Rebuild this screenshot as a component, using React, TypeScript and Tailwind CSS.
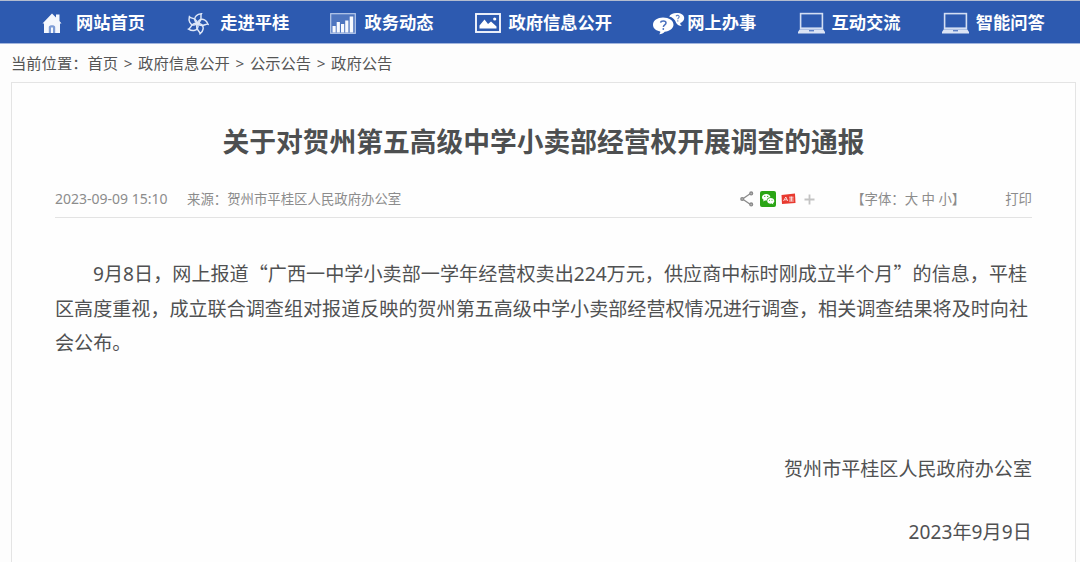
import React from "react";

const HomeIcon = () => (
  <svg width="20" height="21" viewBox="0 0 20 21" fill="#f4f7fd">
    <path d="M10 0.5 L0.5 10.5 H2 V20 H18 V10.5 H19.5 L17.5 8 V1.5 H14 V4.4 Z" />
    <path d="M6.8 20 V14 C6.8 11.5 13.2 11.5 13.2 14 V20 H11 V14.5 H9 V20 Z" fill="#7d9cd6" />
  </svg>
);

const PinwheelIcon = () => (
  <svg width="23" height="23" viewBox="0 0 22 22" fill="none" stroke="#dfe8f8" strokeWidth="1.4">
    {[8, 80, 152, 224, 296].map((deg) => (
      <path
        key={deg}
        d="M11 11 C7.6 9.8 6.8 6.2 8.8 3.8 C9.8 2.4 11.4 1.6 13.4 1.2 C12.6 3.2 14 4.6 13.6 7 C13.3 8.9 12.3 10.2 11 11 Z"
        transform={`rotate(${deg} 11 11)`}
      />
    ))}
  </svg>
);

const ChartIcon = () => (
  <svg width="26" height="21" viewBox="0 0 26 21">
    <rect x="0.7" y="0.7" width="24.6" height="19.6" fill="#7f9ed6" fillOpacity="0.4" stroke="#b9caeb" strokeWidth="1.2" />
    <path d="M2.5 13h3.2v6.5H2.5z M6.7 9h3.2v10.500H6.7z M11 11h3.2v8.500H11z M15.200 7.500h3.200v12h-3.200z M19.700 3.500h3.500v16h-3.500z" fill="#f7f9fe" />
  </svg>
);

const PictureIcon = () => (
  <svg width="26" height="20" viewBox="0 0 26 20">
    <rect x="1" y="1" width="24" height="18" fill="none" stroke="#f2f5fc" strokeWidth="1.9" />
    <path d="M4.5 15.5 V12.5 L9.5 6.5 L13 11 L16 8.5 L21.5 13.5 V15.5 Z" fill="#fff" />
    <circle cx="19.7" cy="6" r="1.6" fill="#fff" />
  </svg>
);

const BubblesIcon = () => (
  <svg width="32" height="23" viewBox="0 0 32 23">
    <path d="M23.5 1 C28.2 1 31.2 3 31.2 6 C31.2 8.4 29.6 10.2 27.2 11 C27.2 12.2 27.8 13.2 28.8 14 C26.2 14 24.4 13 23.2 11 C22 7.5 19.6 5.4 16.2 4.6 C17.2 2.3 20 1 23.5 1 Z" fill="#fff" />
    <path d="M10 5.5 C16 5.5 20.5 8.500 20.500 12.800 C20.500 16.500 16.500 19.400 11.700 19.800 C10.500 21.300 8.700 22.300 6.200 22.300 C7.100 21.400 7.400 20.400 7.200 19.500 C2.800 18.800 0 16.200 0 12.800 C0 8.500 4.500 5.500 10 5.500 Z" fill="#fff" />
    <path d="M7.600 10.600 C8 8.400 13 8.200 13 11 C13 13 10.400 12.800 10.400 15" fill="none" stroke="#4a70bd" strokeWidth="1.5" />
    <circle cx="10.300" cy="17" r="0.900" fill="#4a70bd" />
    <path d="M23 4.200 C23.600 3 26.400 3.100 26.200 4.800 C26.100 6 24.900 5.800 24.800 7.200" fill="none" stroke="#5f81c6" strokeWidth="1.100" />
    <circle cx="24.800" cy="8.900" r="0.700" fill="#5f81c6" />
  </svg>
);

const LaptopIcon = () => (
  <svg width="27" height="22" viewBox="0 0 27 22">
    <rect x="2.6" y="1.6" width="21.8" height="14.6" fill="none" stroke="#d3def3" strokeWidth="1.6" />
    <path d="M1.8 17.2 H25.2 L27 20 V21.4 H0 V20 Z" fill="#dbe4f5" />
    <path d="M11 18 H16 V19.4 H11 Z" fill="#5f81c6" />
  </svg>
);

const navItems = [
  { label: "网站首页", icon: <HomeIcon /> },
  { label: "走进平桂", icon: <PinwheelIcon /> },
  { label: "政务动态", icon: <ChartIcon /> },
  { label: "政府信息公开", icon: <PictureIcon /> },
  { label: "网上办事", icon: <BubblesIcon /> },
  { label: "互动交流", icon: <LaptopIcon /> },
  { label: "智能问答", icon: <LaptopIcon /> },
];

const ShareIcon = () => (
  <svg width="14" height="16" viewBox="0 0 14 16" fill="none" stroke="#8b8b8b" strokeWidth="1.3">
    <path d="M10.5 2.5 L2.5 8 L10.5 13.5" />
    <circle cx="11.2" cy="2.4" r="1.4" fill="#bbb" />
    <circle cx="2.2" cy="8" r="1.4" fill="#bbb" />
    <circle cx="11.2" cy="13.4" r="1.4" fill="#bbb" />
  </svg>
);

const WechatIcon = () => (
  <svg width="16" height="16" viewBox="0 0 16 16">
    <rect width="16" height="16" rx="2" fill="#2aa515" />
    <path d="M6.2 3 C8.6 3 10.4 4.4 10.4 6.3 C8.2 6.3 6.7 7.6 6.8 9.6 L5 9.4 L3.2 10.4 L3.6 8.8 C2.6 8.1 2 7.3 2 6.2 C2 4.4 3.9 3 6.2 3 Z" fill="#fff" />
    <path d="M10.7 7 C12.7 7 14.3 8.2 14.3 9.9 C14.3 10.8 13.8 11.5 13 12.1 L13.3 13.4 L11.8 12.6 C9.2 13.1 7.2 11.8 7.2 9.9 C7.2 8.2 8.7 7 10.7 7 Z" fill="#fff" />
    <g fill="#2aa515">
      <circle cx="4.8" cy="5.4" r="0.6" />
      <circle cx="7.7" cy="5.4" r="0.6" />
      <circle cx="9.5" cy="9.2" r="0.5" />
      <circle cx="12" cy="9.2" r="0.5" />
    </g>
  </svg>
);

const ReadBadge = () => (
  <svg width="15" height="12" viewBox="0 0 15 12">
    <path d="M0.5 2 L14 0.6 L14.5 10 L1 11 Z" fill="#e8392f" />
    <path d="M2.5 8 L4.8 4 L6.8 8 M3.6 6.8 H6 M8 4.2 H12.6 M8.2 6 H12.6 M8 8 H12.8 M10.3 3.5 V8.3" fill="none" stroke="#fff" strokeWidth="0.9" strokeOpacity="0.85" />
  </svg>
);

const App = () => {
  return (
    <div
      lang="zh-CN"
      className="h-[562px] w-[1080px] overflow-hidden bg-[#fdfdfd] font-['Noto_Sans','Noto_Sans_CJK_SC',sans-serif] whitespace-nowrap text-[#505152]"
    >
      <nav className="flex h-[44px] items-center border-t border-b border-t-[#b3bccf] border-b-[#a3b6dd] bg-[#2d5ab0] pt-0.5 pl-[40px]">
        {navItems.map((item) => (
          <a key={item.label} className="mr-[39.2px] flex shrink-0 items-center">
            <span className="flex w-9 pl-0.5">{item.icon}</span>
            <span className="text-[17.25px] leading-6 font-bold text-white">{item.label}</span>
          </a>
        ))}
      </nav>

      <div className="flex h-[38px] items-center pl-[11px] text-[15.3px] leading-5 text-[#555]">
        <span>当前位置：</span>
        <span>首页</span>
        <span className="w-5 text-center">&gt;</span>
        <span>政府信息公开</span>
        <span className="w-5 text-center">&gt;</span>
        <span>公示公告</span>
        <span className="w-5 text-center">&gt;</span>
        <span>政府公告</span>
      </div>

      <main className="ml-[11px] h-[500px] w-[1065px] border border-[#e4e4e4] bg-[#fefefe] px-[43px]">
        <h1 className="mt-[39px] text-center text-[26.75px] leading-10 font-bold text-[#4d4f50]">
          关于对贺州第五高级中学小卖部经营权开展调查的通报
        </h1>

        <div className="mt-[17px] flex h-[39px] items-center border-b border-[#e3e3e3] pt-0.5 text-[13.4px] leading-5 text-[#8c8c8c]">
          <span className="w-[132px] text-[14px]">2023-09-09 15:10</span>
          <span>来源：贺州市平桂区人民政府办公室</span>
          <div className="ml-auto flex items-center">
            <ShareIcon />
            <span className="ml-1.5"><WechatIcon /></span>
            <span className="ml-[5px]"><ReadBadge /></span>
            <svg className="ml-2" width="11" height="11" viewBox="0 0 11 11">
              <path d="M5.5 0.5 V10.5 M0.5 5.5 H10.5" stroke="#c3c3c3" strokeWidth="1.8" />
            </svg>
          </div>
          <span className="ml-9">【字体：大 中 小】</span>
          <span className="ml-10">打印</span>
        </div>

        <div className="mt-[38px] text-[19.08px] leading-[34.5px]">
          <p className="pl-[38px] tracking-[0.04px]">
            9月8日，网上报道<span className="font-['Noto_Sans_CJK_SC',sans-serif]">“</span>广西一中学小卖部一学年经营权卖出224万元，供应商中标时刚成立半个月<span className="font-['Noto_Sans_CJK_SC',sans-serif]">”</span>的信息，平桂
          </p>
          <p>区高度重视，成立联合调查组对报道反映的贺州第五高级中学小卖部经营权情况进行调查，相关调查结果将及时向社</p>
          <p>会公布。</p>
        </div>

        <div className="mt-[91px] text-right text-[19.08px] leading-[34.5px]">
          <p>贺州市平桂区人民政府办公室</p>
          <p className="mt-[29px] tracking-[0.1px]">2023年9月9日</p>
        </div>
      </main>
    </div>
  );
};

export default App;
